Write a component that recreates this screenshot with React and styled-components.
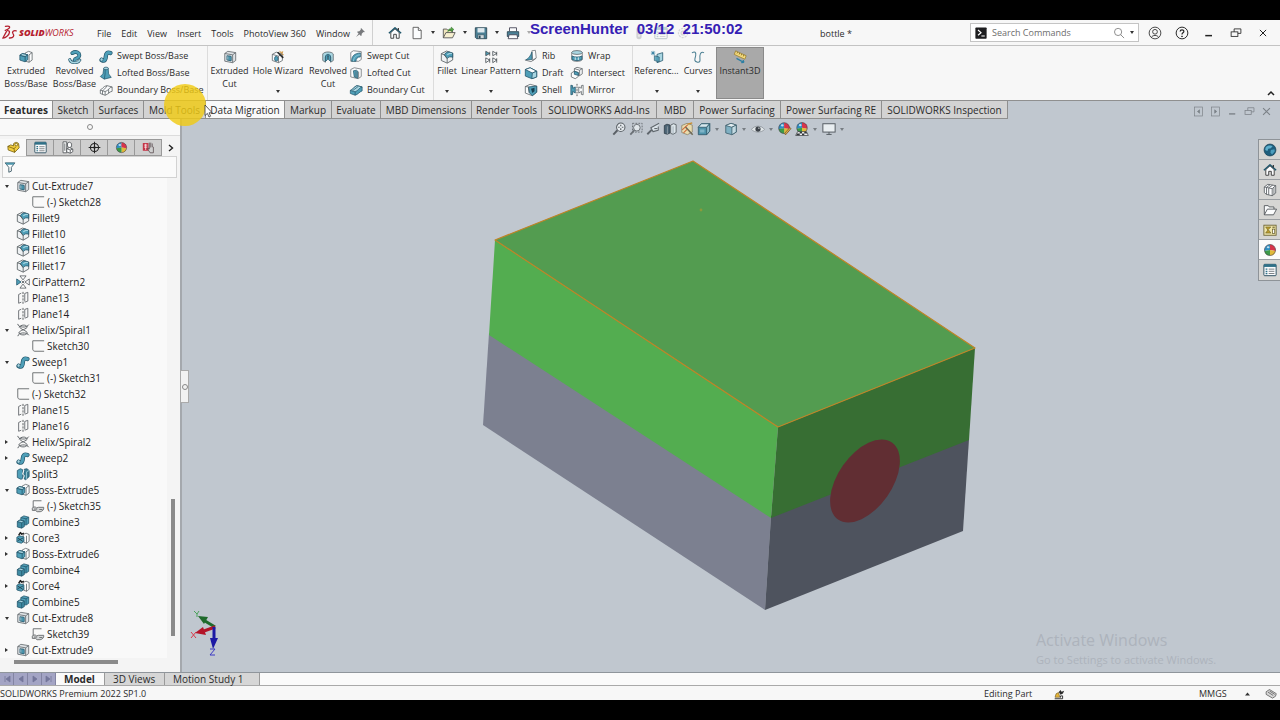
import React from "react";
import styled, { createGlobalStyle, css } from "styled-components";

const T = "#4f9fb8"; // teal face
const L = "#a9d6e2"; // light teal face
const D = "#23566b"; // dark teal outline
const G = "#5d6367"; // grey outline
const W = "#fbfcfd";

const GlobalStyle = createGlobalStyle`
  * { box-sizing: border-box; }
  html, body { margin: 0; background: #000; }
  body { font-family: "Open Sans", "Noto Sans", sans-serif; font-size: 9px; color: #2b2b2b; }
  button, input { font: inherit; color: inherit; }
  ul { list-style: none; margin: 0; padding: 0; }
`;

/* ---------- icons ---------- */

const sphere = (cx, cy, r) => (
  <g>
    <path d={`M${cx} ${cy}L${cx - r} ${cy + 1}A${r} ${r} 0 0 1 ${cx} ${cy - r}Z`} fill="#2e8fc4" />
    <path d={`M${cx} ${cy}V${cy - r}A${r} ${r} 0 0 1 ${cx + r} ${cy + 1}Z`} fill="#d8344a" />
    <path d={`M${cx} ${cy}L${cx + r} ${cy + 1}A${r} ${r} 0 0 1 ${cx} ${cy + r}Z`} fill="#e0b93a" />
    <path d={`M${cx} ${cy}V${cy + r}A${r} ${r} 0 0 1 ${cx - r} ${cy + 1}Z`} fill="#3c9a48" />
    <circle cx={cx} cy={cy} r={r} fill="none" stroke="#4a4048" strokeWidth="0.7" />
    <ellipse cx={cx - r / 3} cy={cy - r / 2} rx={r / 4} ry={r / 5} fill="#fff" opacity="0.7" />
  </g>
);

const sweepShape = (
  <g>
    <path d="M3 12.6C6.8 14.6 7.6 11.4 7.8 8.4C8 5 9.6 3.2 13 4.6" fill="none" stroke={D} strokeWidth="5" strokeLinecap="round" />
    <path d="M3 12.6C6.8 14.6 7.6 11.4 7.8 8.4C8 5 9.6 3.2 13 4.6" fill="none" stroke={T} strokeWidth="3.4" strokeLinecap="round" />
    <ellipse cx="3" cy="12" rx="1.7" ry="2" fill={L} stroke={D} strokeWidth="0.7" />
  </g>
);

const ICONS = {
  extrude: (
    <g strokeWidth="0.9" strokeLinejoin="round">
      <path d="M7 3.5L11 1.5L15 3V11.5L11.5 14L8 13Z" fill={W} stroke={G} />
      <path d="M11.5 5.5V14M11.5 5.5L15 3" stroke={G} fill="none" />
      <path d="M1 6L4 4L10 5.5V11L7 13.5L1 11.5Z" fill={T} stroke={D} />
      <path d="M1 6L7 7.5L10 5.5M7 7.5V13.5" stroke={D} fill="none" />
      <path d="M1 6L4 4L10 5.5L7 7.5Z" fill={L} stroke={D} />
    </g>
  ),
  revolve: (
    <g fill="none" strokeLinecap="round">
      <path d="M5 3.5C9 0.8 14 3 12.6 7.4C11.8 10 8 9 7.6 11.4" stroke={D} strokeWidth="4.4" />
      <path d="M5 3.5C9 0.8 14 3 12.6 7.4C11.8 10 8 9 7.6 11.4" stroke={T} strokeWidth="2.8" />
      <path d="M2 11C3 15.5 12 15.5 13.5 11.5" stroke={D} strokeWidth="3.4" />
      <path d="M2 11C3 15.5 12 15.5 13.5 11.5" stroke={L} strokeWidth="1.9" />
    </g>
  ),
  sweep: sweepShape,
  loft: (
    <g stroke={D} strokeWidth="0.8" strokeLinejoin="round">
      <path d="M5.5 2.5L4.5 9L1.5 12L6 15L14 13L11 9L10.5 2.5Z" fill={T} />
      <ellipse cx="8" cy="2.8" rx="2.6" ry="1.5" fill={L} />
      <path d="M6 15L7 9L7 4" fill="none" />
    </g>
  ),
  boundary: (
    <g stroke={G} strokeWidth="0.9" fill={W} strokeLinejoin="round">
      <path d="M1.5 8C4 7 5 3.5 9 3L15 4.5V9.5C11.5 10 10.5 13 7 14L1.5 12Z" />
      <path d="M1.5 8L7 9.8C10.5 9 11.5 5 15 4.5M7 9.8V14M4 9V13M9 3.2C7 7 6 7 4 9M11 7V12" fill="none" />
    </g>
  ),
  cut: (
    <g strokeWidth="0.9" strokeLinejoin="round">
      <path d="M2 4L5.5 1.5L14.5 3V12L11 14.5L2 12.8Z" fill="#dfe3e6" stroke={G} />
      <path d="M2 4L11 5.5L14.5 3M11 5.5V14.5" stroke={G} fill="none" />
      <path d="M4.5 6.5L9.2 7.3V12.3L4.5 11.4Z" fill={L} stroke={D} />
      <path d="M6.6 6.9V11.8L9.2 12.3V7.3Z" fill={T} stroke={D} strokeWidth="0.6" />
    </g>
  ),
  hole: (
    <g strokeLinejoin="round">
      <path d="M1.5 5L6 2.5L13 4.5V12L8.5 14.5L1.5 12Z" fill={W} stroke={G} strokeWidth="0.9" />
      <path d="M1.5 5L8.5 7L13 4.5M8.5 7V14.5" fill="none" stroke={G} strokeWidth="0.9" />
      <ellipse cx="6" cy="10" rx="2" ry="2.8" fill={T} stroke={D} strokeWidth="0.8" />
      <path d="M14 9L7.5 2.5" stroke="#2c2c2c" strokeWidth="1.8" />
      <path d="M10 1L11 3L13.5 2L12 4.3L14.5 5.5" stroke="#c98a2e" strokeWidth="1" fill="none" />
    </g>
  ),
  revcut: (
    <g strokeWidth="0.9" strokeLinejoin="round">
      <path d="M2 4.5C4 1.5 12 1.5 14 4.5V12L11 14V8L8 6.5L5 8V14L2 12Z" fill={L} stroke={G} />
      <path d="M5 8C5 4 11 4 11 8V13L8.6 11V6.5H7.4V11L5 13Z" fill={T} stroke={D} />
    </g>
  ),
  sweptcut: (
    <g strokeWidth="0.8" strokeLinejoin="round">
      <path d="M2 4L5 2L14 3V12L11 14H2Z" fill={W} stroke={G} />
      <path d="M3 14C3 8 6 5 13 4.5V9C9.5 9 8 11 8 14Z" fill={T} stroke={D} />
      <path d="M5 14C5.5 9.5 8 7 13 6.6" fill="none" stroke={L} />
    </g>
  ),
  loftcut: (
    <g strokeWidth="0.8" strokeLinejoin="round">
      <path d="M2 4L6 2L14 3.5V12L10.5 14.5L2 12.5Z" fill={W} stroke={G} />
      <path d="M5 5.5L8.5 4.8L10 6V14L6 12.5Z" fill={T} stroke={D} />
      <path d="M8 6V13M11 6.5V13.5" stroke={G} />
    </g>
  ),
  boundcut: (
    <g strokeWidth="0.8" strokeLinejoin="round">
      <path d="M1.5 8.5C4 8 6 4 9 3L15 4.5V9C12 10 10.5 13 7 14L1.5 12Z" fill={T} stroke={D} />
      <path d="M1.5 8.5L7 10C10.5 9 12 5 15 4.5L9 3C6 4 4 8 1.5 8.5Z" fill={L} stroke={D} />
      <path d="M4 8.8L10.5 4M7 10V14" stroke={D} fill="none" />
    </g>
  ),
  fillet: (
    <g strokeWidth="1" strokeLinejoin="round">
      <path d="M1.5 4.2L7.5 1.2L14.5 3.6V11.4L8.2 15L1.5 12Z" fill="#eef1f3" stroke={G} />
      <path d="M5 5.6C5.6 3.6 8.4 2 10.4 2.3L14.5 3.6V8.4C12.4 7.2 9.4 7.6 8.2 9.8Z" fill={T} stroke={D} />
      <path d="M8.4 5.6C9.6 4.2 11.6 3.6 13.6 4" fill="none" stroke={L} strokeWidth="1.4" />
      <path d="M1.5 4.2L5 5.6L8.2 9.8V15" fill="none" stroke={G} />
    </g>
  ),
  linear: (
    <g stroke="#40474d" strokeWidth="0.9" fill={W} strokeLinejoin="round">
      <path d="M2 1.5L6.5 4L2 6.5Z" fill={T} />
      <path d="M10 1.5L14.5 4L10 6.5ZM2 9L6.5 11.5L2 14.5ZM10 9L14.5 11.5L10 14.5Z" />
      <path d="M6.5 2V6.5M14.5 2V6.5M6.5 9.5V14.5M14.5 9.5V14.5" />
    </g>
  ),
  rib: (
    <g strokeWidth="0.8" strokeLinejoin="round">
      <path d="M9 2L13 1.5L14 10L10 13Z" fill={W} stroke={G} />
      <path d="M9 3.5V12L2 12.5C5 11 7.5 8 9 3.5Z" fill={T} stroke={D} />
      <path d="M1 12.5L8 14.5L14 10.5" stroke={G} fill="none" />
    </g>
  ),
  draft: (
    <g strokeWidth="0.9" strokeLinejoin="round">
      <path d="M1.5 4L7 2L14.5 6V12.5L9 14.5L1.5 11.5Z" fill={T} stroke={D} />
      <path d="M1.5 4L7 2L14.5 6L9.5 8Z" fill={W} stroke={D} />
      <path d="M9.5 8L14.5 6V12.5L9 14.5Z" fill={L} stroke={D} />
    </g>
  ),
  shell: (
    <g strokeWidth="0.9" strokeLinejoin="round">
      <path d="M1.5 4L7 1.5L14.5 3.5V10.5L9.5 14.5L1.5 11.5Z" fill={W} stroke={G} />
      <path d="M5 4.5L14.5 3.5V10.5L9.5 14.5L6 11Z" fill={T} stroke={D} />
      <path d="M8 6.5L12 5.5V9.5L9.5 11.5Z" fill="#173f50" />
      <path d="M1.5 4L5 4.5L6 11" fill="none" stroke={G} />
    </g>
  ),
  wrap: (
    <g strokeWidth="0.9">
      <path d="M2 4V12C3 14.8 13 14.8 14 12V4Z" fill={W} stroke={G} />
      <ellipse cx="8" cy="4" rx="6" ry="2.2" fill={L} stroke={G} />
      <path d="M2.4 8C5 9.6 11 9.6 13.6 8V12C11 13.6 5 13.6 2.4 12Z" fill={T} stroke={D} />
      <path d="M6 9.5V12.5M9.5 9.5V12.5" stroke={W} />
    </g>
  ),
  intersect: (
    <g strokeWidth="0.9" strokeLinejoin="round">
      <path d="M5 3L8 1.5L14 3V9L11 11L5 9.5Z" fill={W} stroke={G} />
      <path d="M1.5 8L5 6L9.5 7.5V12L6 14.5L1.5 12.5Z" fill={W} stroke={G} />
      <path d="M5 6L9.5 7.5V10.7L5 9.5Z" fill={T} stroke={D} />
      <path d="M5 3L11 4.8L14 3M11 4.8V11" stroke={G} fill="none" />
    </g>
  ),
  mirror: (
    <g strokeWidth="0.9" strokeLinejoin="round">
      <path d="M1 2.5L3 3V6L6 4.5V11.5L3 9.5V13L1 13.5Z" fill={T} stroke={D} />
      <path d="M15 2.5L13 3V6L10 4.5V11.5L13 9.5V13L15 13.5Z" fill={W} stroke={G} />
      <path d="M8 1V15" stroke="#333" strokeDasharray="2 1" />
    </g>
  ),
  refgeo: (
    <g strokeWidth="0.9" strokeLinejoin="round">
      <path d="M8 5L14.5 3V12L8 14.5Z" fill={L} stroke={D} />
      <path d="M5 6.5L10.5 8V13.5L5 12Z" fill={T} stroke={D} opacity="0.85" />
      <path d="M3.5 1V6M1 3.5H6M1.7 1.7L5.3 5.3M5.3 1.7L1.7 5.3" stroke="#2f7da0" />
    </g>
  ),
  curves: (
    <g fill="none" stroke="#4b7f92" strokeWidth="1.2" strokeLinecap="round">
      <path d="M1.5 3C4 1.5 6 2.5 5.4 6C4.8 10 2.5 13 7.5 14C12.5 14.5 9 8.5 10.5 5C11.3 3 12.6 2 14.5 3" />
    </g>
  ),
  instant: (
    <g strokeLinejoin="round">
      <path d="M3 1L15 6.5L13.5 10.5L1.5 5Z" fill="#f5dc80" stroke="#94761e" strokeWidth="0.8" />
      <path d="M5.2 2.4L4.6 4M7.6 3.4L7 5.2M10 4.6L9.4 6.2M12.4 5.6L11.8 7.4" stroke="#6b5310" strokeWidth="0.8" />
      <path d="M4 9.5L12 14M12.4 14.2L11.6 11.6M12.4 14.2L9.4 14.4" stroke="#2d7fa3" strokeWidth="1.6" fill="none" />
    </g>
  ),
  home: (
    <g strokeLinejoin="round">
      <path d="M3.2 7.5V14H6.5V9.5H9.5V14H12.8V7.5L8 3.2Z" fill={W} stroke="#333" strokeWidth="1" />
      <path d="M1 8.3L8 2L15 8.3" fill="none" stroke="#20566a" strokeWidth="1.7" />
      <path d="M11.8 2.4V5" stroke="#333" strokeWidth="1.4" />
    </g>
  ),
  doc: (
    <g stroke="#555" strokeWidth="1" fill={W} strokeLinejoin="round">
      <path d="M3.5 1.5H9.5L12.8 5V14.5H3.5Z" />
      <path d="M9.5 1.5V5H12.8" />
    </g>
  ),
  open: (
    <g strokeLinejoin="round">
      <path d="M1.5 13.5V3.5H5.5L7 5H12V8" fill="#f0e6bd" stroke="#555" strokeWidth="1" />
      <path d="M1.5 13.5L4.5 7.5H15L12 13.5Z" fill="#f6efcf" stroke="#555" strokeWidth="1" />
      <path d="M6.5 6.5C7 3.5 8.5 3 10.5 3V1.2L13.6 4L10.5 6.6V4.9C9 4.9 8 5.2 6.5 6.5Z" fill="#53a244" stroke="#2c6d25" strokeWidth="0.5" />
    </g>
  ),
  save: (
    <g strokeLinejoin="round">
      <path d="M1.5 2H14.5V14.5H3L1.5 13Z" fill="#4a7f94" stroke="#2a4654" strokeWidth="1" />
      <rect x="4" y="2.4" width="8" height="5" fill="#dfe9ee" />
      <rect x="4.5" y="10" width="7" height="4.3" fill="#cfd8dc" stroke="#2a4654" strokeWidth="0.6" />
      <rect x="5.5" y="11" width="2" height="3" fill="#2a4654" />
    </g>
  ),
  print: (
    <g strokeLinejoin="round">
      <path d="M4 6V2H12V6" fill={W} stroke="#445" strokeWidth="1" />
      <path d="M1.5 6.5H14.5V12H1.5Z" fill="#4b8197" stroke="#2a4654" strokeWidth="1" />
      <path d="M3.5 10H12.5L13.5 14.5H2.5Z" fill={W} stroke="#445" strokeWidth="1" />
    </g>
  ),
  pin: (
    <g fill="#77797c">
      <path d="M8.8 1.5L14.5 7.2L13 7.8L12.2 7.4L9.8 9.8L9.6 12.4L8.6 13L3 7.4L3.8 6.4L6.3 6.2L8.6 3.8L8.2 2.8Z" />
      <path d="M5.5 9.2L6.8 10.5L1.5 14.5Z" />
    </g>
  ),
  user: (
    <g fill="none" stroke="#333" strokeWidth="1">
      <circle cx="8" cy="8" r="6.7" />
      <circle cx="8" cy="6.6" r="2.7" />
      <path d="M4 13.2C4.5 10 11.5 10 12 13.2" />
    </g>
  ),
  help: (
    <g fill="none" stroke="#222" strokeWidth="1.1">
      <circle cx="8" cy="8" r="6.7" />
      <path d="M5.9 6.3C5.9 3.6 10.2 3.7 10.1 6.2C10 7.8 8 7.8 8 9.6" strokeWidth="1.4" />
      <circle cx="8" cy="11.8" r="0.5" fill="#222" />
    </g>
  ),
  min: <path d="M3 11.5H12" stroke="currentColor" strokeWidth="2" />,
  restore: (
    <g fill="none" stroke="currentColor" strokeWidth="1.1">
      <path d="M5.5 6.5V2.5H14.5V8.5H10.5" />
      <rect x="1.5" y="6.5" width="9" height="6" />
    </g>
  ),
  close: <path d="M3 3L13 13M13 3L3 13" stroke="currentColor" strokeWidth="1.6" />,
  paneL: (
    <g fill="none" stroke="currentColor" strokeWidth="1">
      <rect x="2" y="1.5" width="12" height="13" />
      <path d="M9.5 5.5L6.5 8L9.5 10.5Z" fill="currentColor" />
    </g>
  ),
  paneR: (
    <g fill="none" stroke="currentColor" strokeWidth="1">
      <rect x="2" y="1.5" width="12" height="13" />
      <path d="M6.8 5.5L9.8 8L6.8 10.5Z" fill="currentColor" />
    </g>
  ),
  terminal: (
    <g>
      <rect x="0.5" y="0.5" width="15" height="15" rx="1" fill="#1d1d1f" />
      <path d="M4 4L8 7.5L4 11" fill="none" stroke="#fff" strokeWidth="1.6" />
      <path d="M8.5 12H13" stroke="#fff" strokeWidth="1.4" />
    </g>
  ),
  search: (
    <g fill="none" stroke="#777" strokeWidth="1.1">
      <circle cx="6.8" cy="6.6" r="4.8" />
      <path d="M10.2 10.2L14.8 14.8" />
    </g>
  ),
  part: (
    <g stroke="#6b560a" strokeWidth="0.9" strokeLinejoin="round">
      <path d="M1 6.6L4.6 4.8L8 6V3.8C8.6 1.6 12 0.8 14.2 3L15 8.4L9.4 14L1.4 11Z" fill="#f2cd3f" />
      <path d="M1 6.6L8.6 9.4L11 7.2M8.6 9.4L9.4 14" fill="none" />
      <circle cx="11.4" cy="4.4" r="1.6" fill="#fff4c0" />
    </g>
  ),
  props: (
    <g>
      <rect x="1" y="1.5" width="14" height="13" rx="1" fill={W} stroke="#2c4f60" strokeWidth="1.1" />
      <rect x="1" y="1.5" width="14" height="3" fill="#2f7188" />
      <path d="M3 7H5M3 9.5H5M3 12H5" stroke="#2f7188" strokeWidth="1.5" />
      <path d="M6.5 7H13M6.5 9.5H13M6.5 12H13" stroke="#6c7478" strokeWidth="1" />
    </g>
  ),
  config: (
    <g fill={W} stroke="#505458" strokeWidth="1" strokeLinejoin="round">
      <path d="M2.5 1H7V14.5H2.5Z" />
      <path d="M8 2.5L10.5 1.5L13 3V7L10.5 8L8 7Z" />
      <path d="M7 9.5L10.5 8L14.5 10V13.2L11.4 15L7 13.5Z" />
      <path d="M4.7 3V12M7 9.5L11.4 11L14.5 10M11.4 11V15" fill="none" />
    </g>
  ),
  dimx: (
    <g fill="none" stroke="#222" strokeWidth="1.3">
      <circle cx="8" cy="8" r="5" />
      <path d="M8 0.8V15.2M0.8 8H15.2" />
      <circle cx="8" cy="8" r="0.8" fill="#222" />
    </g>
  ),
  appear: sphere(8, 8, 6.3),
  cam: (
    <g strokeLinejoin="round">
      <path d="M1 2.5H8V12H1Z" fill="#c53346" />
      <path d="M2.5 5H6.5M2.5 7.5H6.5M4.5 3.5V11" stroke="#fff" strokeWidth="0.9" />
      <path d="M9 2V10L7.5 8.5L7 10L10 14.5H14V7.5L12.6 7V3M10.8 2V8" fill="none" stroke="#5e5054" strokeWidth="1" />
    </g>
  ),
  funnel: (
    <g strokeLinejoin="round">
      <path d="M1.5 2.5H14.5L9.8 8.5V13.5L6.4 15V8.5Z" fill={W} stroke="#2f4e5b" strokeWidth="1.1" />
      <path d="M2 2.2H14L12.6 5H3.6Z" fill="#4a94aa" />
    </g>
  ),
  sketch: <path d="M15 2H2V11.5C2 13 3 14 4.5 14H15" fill="none" stroke="#6d7073" strokeWidth="1.1" />,
  sketchShared: (
    <g fill="none" stroke="#6d7073" strokeWidth="1.1">
      <path d="M12 2H2.5V10" />
      <path d="M1.5 10.5C2 8.8 5 8.6 6.5 10.2L8.5 9.5H14.5C15 12 13 14.2 10.5 14.5H7L5 13H1.5Z" fill="#d4d6d7" />
      <path d="M3.5 11.5H7M9.5 12H13" />
    </g>
  ),
  pattern: (
    <g stroke="#50565a" strokeWidth="0.9" fill={W} strokeLinejoin="round">
      <path d="M0.8 4.5L5.8 8L0.8 11.5Z" fill={T} stroke={D} />
      <path d="M15.2 4.5L10.2 8L15.2 11.5ZM4.5 1L8 5.6L11.5 1ZM4.5 15L8 10.4L11.5 15Z" />
      <path d="M6.4 6.4L9.6 9.6M9.6 6.4L6.4 9.6" />
    </g>
  ),
  plane: (
    <g fill="none" stroke="#62676b" strokeWidth="1">
      <path d="M6 2.5L3 4V14L6 12.8M10 12V2.8L13.5 1.5V11.5L10 12.8" />
      <path d="M8 1V15" stroke="#45494c" strokeDasharray="2.5 1.2" />
    </g>
  ),
  helix: (
    <g fill="none" stroke="#5f6468" strokeWidth="1.1" strokeLinecap="round">
      <path d="M2 1.5C2.4 5.4 12.4 6 14.4 2.2" />
      <path d="M2.2 14.6C2.4 10.6 12.4 10 14.4 13.6" />
      <path d="M4 4.4C5.6 1.8 11 1.6 12.8 4.2C13.4 6.8 3.4 8.4 3.2 11.4C4.4 14.2 11.4 14.4 13 11.6C12.6 8.6 4.4 7.4 4 4.4Z" />
    </g>
  ),
  split: (
    <g strokeWidth="0.9" strokeLinejoin="round">
      <path d="M1.5 4L5 2L7.5 3V13.5L5.5 14L1.5 12Z" fill={T} stroke={D} />
      <path d="M9.5 2.5L12.5 2L15 4V11L11 14.5L8.5 13Z" fill="#3b7f95" stroke={D} />
      <path d="M9 3.5L7.5 8L9.5 10L8 14" fill="none" stroke="#fff" strokeWidth="1.1" />
      <path d="M12 5.5L15 4M12 5.5V13.5" stroke={L} fill="none" />
    </g>
  ),
  combine: (
    <g stroke={D} strokeWidth="0.9" strokeLinejoin="round">
      <path d="M5.5 3L9 1L14.5 2.5V9.5L11.5 11.5L5.5 10Z" fill={T} />
      <path d="M5.5 3L11.5 4.4L14.5 2.5M11.5 4.4V11" fill="none" />
      <path d="M1.5 7.5L4.5 5.8L9.5 7V13.2L6.5 15L1.5 13.7Z" fill="#3f8ba3" />
      <path d="M1.5 7.5L4.5 5.8L9.5 7L6.5 8.8Z" fill={L} />
      <path d="M6.5 8.8V15" />
    </g>
  ),
  core: (
    <g strokeWidth="0.9" strokeLinejoin="round">
      <path d="M8 4L11.5 2.5L15 4V11.5L12.5 14L9 13Z" fill={W} stroke={G} />
      <path d="M12 5.5V14" stroke={G} />
      <path d="M1 7L4 5.5L9 6.8V12L6 14L1 12.5Z" fill={T} stroke={D} />
      <path d="M3 5L5 1.8L6.5 3.6L9 2.6" stroke="#222" strokeWidth="1.7" fill="none" />
      <path d="M2 8L8 12M2 11L8 8" stroke="#1f3b47" />
    </g>
  ),
  zoomfit: (
    <g fill="none" stroke="#5a6066" strokeWidth="1.2">
      <circle cx="10" cy="6" r="4.8" fill="#e8edf1" />
      <path d="M6.2 9.4L1.5 14.5" strokeWidth="2.2" />
      <path d="M10 3V4.8M10 7.2V9M7 6H8.8M11.2 6H13" strokeWidth="1.4" />
    </g>
  ),
  zoomarea: (
    <g fill="none" stroke="#6a7076" strokeWidth="1.1">
      <rect x="4" y="1.5" width="11" height="10" strokeDasharray="2 1.4" />
      <circle cx="9" cy="6.5" r="3.8" fill="#e0e6ea" />
      <path d="M6.2 9.3L1.5 14.5" strokeWidth="2" />
    </g>
  ),
  prevview: (
    <g fill="none" stroke="#5f666c" strokeWidth="1.2" strokeLinejoin="round">
      <path d="M15 1.5L5.5 6.5L8 11L14 9.5V5" fill="#d9e2e8" />
      <path d="M6.5 9L1.5 14" strokeWidth="2.2" />
      <path d="M9.5 7.5H13" />
    </g>
  ),
  section: (
    <g strokeWidth="0.9" strokeLinejoin="round">
      <path d="M1.5 4L4.5 2.5L8 3.5V12.5L5 14L1.5 13Z" fill="#4b6475" stroke="#2d3b45" />
      <path d="M8.8 3.5L12 2L15 3V12L11.5 14L8.8 13Z" fill="#dde6eb" stroke="#4a5257" />
      <path d="M5 5V14M11.5 5V14" stroke="#99a5ad" />
    </g>
  ),
  dynview: (
    <g strokeLinejoin="round">
      <path d="M2 4L8 1.5L14 3.5V11.5L8.5 14.5L2 12Z" fill="#e9dcae" stroke="#8a8267" strokeWidth="0.9" />
      <path d="M14.5 14.5L6 5.5" stroke="#6f6a58" strokeWidth="1.8" />
      <path d="M2.5 9L9 3M4 12.5L8 8.5" stroke="#cf6a3a" strokeWidth="1.2" />
      <path d="M9 2.5L14 1" stroke="#c98b2a" strokeWidth="1.6" />
    </g>
  ),
  orient: (
    <g strokeWidth="0.9" strokeLinejoin="round">
      <path d="M1.5 6L5 2H14.5V10.5L11 14.5H1.5Z" fill="#4f93ab" stroke="#2c5567" />
      <path d="M1.5 6L5 2H14.5L11 6Z" fill="#d7e8ee" stroke="#2c5567" />
      <path d="M11 6V14.5L14.5 10.5V2Z" fill="#8fbccb" stroke="#2c5567" />
      <path d="M3.5 8.5H8.5V12H3.5Z" fill="#7fb4c7" stroke="none" />
    </g>
  ),
  display: (
    <g strokeWidth="0.9" strokeLinejoin="round">
      <path d="M2 4L8 1.5L14 3.5V11.5L9 14.5L2 12.5Z" fill="#7fb0c3" stroke="#3a5b69" />
      <path d="M2 4L8 1.5L14 3.5L9 6Z" fill="#e3eef2" stroke="#3a5b69" />
      <path d="M9 6V14.5L14 11.5V3.5Z" fill="#c3dae2" stroke="#3a5b69" />
    </g>
  ),
  eye: (
    <g>
      <path d="M0.5 8.5C4 3.5 12 3.5 15.5 8.5C12 12.5 4 12.5 0.5 8.5Z" fill="#e0e5e8" stroke="#848b91" strokeWidth="0.8" />
      <circle cx="8" cy="8" r="3" fill="#3d434a" />
      <circle cx="9" cy="7" r="0.8" fill="#e0e5e8" />
    </g>
  ),
  editAppear: (
    <g>
      {sphere(7, 7, 6.2)}
      <path d="M15 7.5L8.5 14.8L7.8 12.8L13.4 6.5Z" fill="#d8a84e" stroke="#6c4c1a" strokeWidth="0.7" />
    </g>
  ),
  scene: (
    <g>
      {sphere(8, 6.6, 6)}
      <path d="M0.8 15.4L3 11H13L15.2 15.4Z" fill="#f2f2f2" stroke="#33383c" strokeWidth="0.8" />
      <path d="M2.4 13.2H5.4V11.2H8V13.2H10.6V11.2H13L14 13.2H10.6V15.2H8V13.2H5.4V15.2H1.6Z" fill="#33383c" />
    </g>
  ),
  monitor: (
    <g fill="#e9eef1" stroke="#52595f" strokeWidth="1.1">
      <rect x="1" y="2" width="14" height="9.5" />
      <path d="M8 11.5V14M5 14.2H11" />
    </g>
  ),
  globe: (
    <g>
      <circle cx="8" cy="8" r="6.8" fill="#1f5f7d" stroke="#153f54" strokeWidth="0.8" />
      <path d="M3 5C5 2.5 9 2.5 11 3.5L9 6L6 6.5L5 9L2.5 8Z" fill="#5fb0cd" />
      <path d="M9 8L13 7L13.5 9.5L10.5 13L8.5 11Z" fill="#4b9dbd" />
    </g>
  ),
  library: (
    <g fill={W} stroke="#4f5458" strokeWidth="0.9" strokeLinejoin="round">
      <path d="M1.5 4.5L5.5 1.5L14.5 3V11.5L10.5 14.5L4 13L1.5 11Z" />
      <path d="M4 5.5V13M6.5 6V13.5M10.5 6.5V14.5M1.5 4.5L10.5 6.5L14.5 3M4 5L8 2M6.5 5.5L11 2.5M12.5 5V13" fill="none" />
    </g>
  ),
  folder: (
    <g fill={W} stroke="#4f5458" strokeWidth="1" strokeLinejoin="round">
      <path d="M1.5 13.5V3H6L7 4.5H12.5V7" />
      <path d="M1.5 13.5L5 7H15.5L12 13.5Z" />
    </g>
  ),
  palette: (
    <g>
      <rect x="1" y="2.5" width="14" height="11.5" fill="#efe5a8" stroke="#6a6233" strokeWidth="1" />
      <path d="M3 4.5H9L6 7.5L9 11.5H3L5.5 8Z" fill="#bd9e2c" stroke="#5e5423" strokeWidth="0.6" />
      <rect x="10.8" y="7" width="2.6" height="5" fill={W} stroke="#5e5423" strokeWidth="0.8" />
      <path d="M10.8 4.8H13.4" stroke="#5e5423" strokeWidth="1.2" />
    </g>
  ),
  statusEdit: (
    <g>
      <path d="M1.5 12L3 7L6.5 5L8.5 12Z" fill="#e7b63a" stroke="#5b4715" strokeWidth="0.8" />
      <path d="M7 4.5L9.5 1.5L11 4L14.8 2.5L13 6.5L9.5 8.5Z" fill="#2b2b2b" />
      <path d="M1 14.2H12.5V10H9.5V12.5" fill="none" stroke="#333" strokeWidth="1.4" />
    </g>
  ),
  tag: (
    <g fill="#d7d7d7" stroke="#555" strokeWidth="1" strokeLinejoin="round">
      <path d="M1.5 5L6 2L15 7.5L14 11L10 13.5L1.5 8.5Z" />
      <path d="M4 5.5L11 10M6 4L13 8.5" />
    </g>
  ),
  traffic: (
    <g>
      <rect x="5" y="1" width="6" height="14" rx="3" fill="#777b7f" />
      <circle cx="8" cy="4.5" r="1.4" fill="#c9c9c9" />
      <circle cx="8" cy="11" r="1.4" fill="#c9c9c9" />
    </g>
  ),
  gear: (
    <g fill="none" stroke="#8b8f93" strokeWidth="1.4">
      <circle cx="8" cy="8" r="5.2" strokeDasharray="2.4 1.2" />
      <circle cx="8" cy="8" r="2.2" />
    </g>
  ),
};

const Svg = styled.svg`
  width: ${(p) => p.$s}px;
  height: ${(p) => p.$s}px;
  display: block;
  flex: none;
`;
const Icon = ({ name, size = 14 }) => (
  <Svg viewBox="0 0 16 16" $s={size} aria-hidden="true">{ICONS[name]}</Svg>
);

/* ---------- shared parts ---------- */

const plainButton = css`
  border: 0;
  background: none;
  padding: 0;
  margin: 0;
  cursor: default;
`;

const Caret = styled.span`
  width: 0;
  height: 0;
  flex: none;
  border: 2px solid transparent;
  border-top: 3px solid ${(p) => p.$c || "#333"};
  border-bottom: 0;
`;

const IconButton = styled.button`
  ${plainButton}
  width: ${(p) => p.$w || 16}px;
  height: 16px;
  flex: none;
  display: flex;
  align-items: center;
  justify-content: center;
  color: ${(p) => p.$c || "#222"};
  opacity: ${(p) => (p.$faint ? 0.3 : 1)};
`;

/* ---------- frame ---------- */

const Page = styled.div`
  position: relative;
  min-height: 100vh;
  padding: 20px 0;
  background: #000;
  display: flex;
  flex-direction: column;
  overflow: hidden;
`;
const AppWindow = styled.div`
  flex: 1;
  display: flex;
  flex-direction: column;
  background: #f7f7f7;
`;

/* ---------- title bar ---------- */

const TitleBar = styled.header`
  height: 26px;
  flex: none;
  display: flex;
  align-items: center;
  border-bottom: 1px solid #c3c3c3;
`;
const Brand = styled.div`
  width: 97px;
  padding-left: 2px;
  display: flex;
  align-items: center;
  gap: 2px;
  color: #b5202e;
  font: italic 9px/12px "Open Sans", sans-serif;
  b { font-weight: 800; }
`;
const BrandMark = styled.svg`
  width: 15px;
  height: 15px;
`;
const Menu = styled.nav`
  display: flex;
  gap: 10px;
  padding-top: 2px;
`;
const MenuItem = styled.button`
  ${plainButton}
  line-height: 14px;
`;
const PinBox = styled.div`
  width: 23px;
  height: 25px;
  display: flex;
  align-items: center;
  justify-content: center;
  border-right: 1px solid #d0d0d0;
  margin-right: 14px;
`;
const QuickBar = styled.div`
  flex: 1;
  display: flex;
  align-items: center;
  gap: 6px;
`;
const DocName = styled.div`
  width: 150px;
  padding-top: 1px;
`;
const SearchBox = styled.label`
  width: 169px;
  height: 19px;
  display: flex;
  align-items: center;
  gap: 5px;
  padding: 0 4px;
  background: #fff;
  border: 1px solid #c4c4c4;
`;
const SearchInput = styled.input`
  flex: 1;
  min-width: 0;
  border: 0;
  padding: 0;
  outline: 0;
  background: none;
  &::placeholder { color: #6d6d6d; opacity: 1; }
`;
const WindowButtons = styled.div`
  display: flex;
  gap: 11px;
  padding: 0 9px 0 8px;
`;

/* ---------- ribbon ---------- */

const Ribbon = styled.section`
  height: 55px;
  flex: none;
  display: flex;
  border-bottom: 1px solid #8f8f8f;
`;
const Group = styled.div`
  display: flex;
  padding: 0 6px 0 2px;
  border-right: 1px solid #dcdcdc;
`;
const BigButton = styled.button`
  ${plainButton}
  width: ${(p) => p.$w}px;
  height: 52px;
  margin-top: ${(p) => (p.$on ? 1 : 0)}px;
  display: flex;
  flex-direction: column;
  align-items: center;
  padding-top: 4px;
  line-height: 13px;
  white-space: nowrap;
  ${(p) => p.$on && css`background: #a9a9a9; border: 1px solid #8a8a8a; padding-top: 2px;`}
`;
const BigLabel = styled.span`
  height: 26px;
`;
const Stack = styled.div`
  width: ${(p) => p.$w}px;
  display: flex;
  flex-direction: column;
  padding-top: 1px;
`;
const SmallButton = styled.button`
  ${plainButton}
  height: 17px;
  display: flex;
  align-items: center;
  gap: 4px;
  white-space: nowrap;
`;
const Collapse = styled.button`
  ${plainButton}
  margin-left: auto;
  align-self: flex-end;
  padding: 0 5px 4px 0;
  display: flex;
`;

/* ---------- command tabs ---------- */

const Workspace = styled.main`
  flex: 1;
  display: flex;
  flex-direction: column;
  background: #c0c7cf;
`;
const TabRow = styled.div`
  height: 18px;
  flex: none;
  display: flex;
  justify-content: space-between;
`;
const Tabs = styled.div`
  display: flex;
`;
const Tab = styled.button`
  ${plainButton}
  width: ${(p) => p.$w}px;
  flex: none;
  white-space: nowrap;
  border-right: 1px solid #8f8f8f;
  border-bottom: 1px solid #8f8f8f;
  background: ${(p) => (p.$on ? "#f9f9f9" : "#d3d3d3")};
  font-weight: ${(p) => (p.$bold ? 700 : 400)};
  font-size: 10px;
  line-height: 16px;
`;
const DocButtons = styled.div`
  display: flex;
  gap: 1px;
  padding: 2px 6px 0 0;
`;

/* ---------- side panel ---------- */

const Body = styled.div`
  flex: 1;
  display: flex;
`;
const SidePanel = styled.aside`
  position: relative;
  width: 182px;
  flex: none;
  display: flex;
  flex-direction: column;
  background: #f4f4f4;
  border-right: 2px solid #a4a8ad;
`;
const PanelGrip = styled.div`
  height: 17px;
  display: flex;
  align-items: center;
  justify-content: center;
  border-bottom: 1px solid #dcdcdc;
  background: #f9f9f9;
  &::after {
    content: "";
    width: 4px;
    height: 4px;
    border: 1px solid #888;
    border-radius: 50%;
  }
`;
const PanelTabs = styled.div`
  display: flex;
  height: 20px;
  padding-top: 3px;
`;
const PanelTab = styled.button`
  ${plainButton}
  width: 27px;
  display: flex;
  align-items: center;
  justify-content: center;
  background: ${(p) => (p.$on ? "#f9f9f9" : "#cfcfcf")};
  border: solid #999;
  border-width: ${(p) => (p.$on ? "0 1px 0 0" : "1px 1px 1px 0")};
`;
const MoreTabs = styled(PanelTab)`
  width: 18px;
  background: none;
  border: 0;
`;
const FilterBox = styled.label`
  height: 22px;
  margin: 0 3px 0 2px;
  display: flex;
  align-items: center;
  padding-left: 1px;
  background: #fafafa;
  border: 1px solid #d2d2d2;
`;
const TreeArea = styled.div`
  display: flex;
`;
const Tree = styled.ul`
  flex: 1;
  background: #f9f9f9;
`;
const TreeRow = styled.li`
  height: 16px;
  display: flex;
  align-items: center;
  padding-left: ${(p) => (p.$child ? 20 : 5)}px;
  font-size: 10px;
  white-space: nowrap;
  color: #222;
`;
const Twist = styled.span`
  width: 11px;
  flex: none;
  display: flex;
`;
const RightCaret = styled.span`
  border: 2px solid transparent;
  border-left: 3px solid #333;
  border-right: 0;
`;
const RowLabel = styled.span`
  padding-left: 2px;
`;
const VScroll = styled.div`
  width: 13px;
  display: flex;
  justify-content: center;
  align-items: flex-end;
  padding: 0 2px 22px 0;
`;
const HScroll = styled.div`
  flex: 1;
  padding: 2px 0 0 14px;
`;
const Thumb = styled.div`
  width: ${(p) => p.$w}px;
  height: ${(p) => p.$h}px;
  background: #8a8a8a;
`;
const PanelHandle = styled.button`
  ${plainButton}
  position: absolute;
  left: 180px;
  top: 251px;
  width: 9px;
  height: 33px;
  background: #f2f2f2;
  border: 1px solid #aaa;
  display: flex;
  align-items: center;
  justify-content: center;
  z-index: 2;
  &::after {
    content: "";
    width: 4px;
    height: 4px;
    border: 1px solid #888;
    border-radius: 50%;
  }
`;

/* ---------- viewport ---------- */

const Viewport = styled.section`
  position: relative;
  flex: 1;
  overflow: hidden;
`;
const Scene = styled.svg`
  position: absolute;
  inset: 0;
  width: 100%;
  height: 100%;
`;
const ViewTools = styled.div`
  position: absolute;
  top: 2px;
  left: 0;
  right: 4px;
  display: flex;
  justify-content: center;
  align-items: center;
  gap: 1px;
`;
const ViewCaret = styled(Caret)`
  margin: 0 3px 0 2px;
`;
const TaskPane = styled.div`
  position: absolute;
  top: 20px;
  right: 0;
  width: 22px;
  display: flex;
  flex-direction: column;
  border: 1px solid #8e9398;
  border-right: 0;
`;
const TaskTab = styled.button`
  ${plainButton}
  height: 20px;
  display: flex;
  align-items: center;
  justify-content: center;
  background: ${(p) => (p.$on ? "#fbfbfb" : "#d6d6d4")};
  border-bottom: 1px solid #9a9ea2;
  &:last-child { border-bottom: 0; }
`;
const Watermark = styled.div`
  position: absolute;
  right: 57px;
  bottom: 3px;
  color: #adb3bc;
  font-size: 11px;
  line-height: 18px;
  width: 187px;
  white-space: nowrap;
`;
const WatermarkTitle = styled.div`
  font-size: 16px;
  line-height: 22px;
`;

/* ---------- bottom ---------- */

const BottomTabs = styled.nav`
  height: 14px;
  flex: none;
  display: flex;
  background: #fafafa;
  border-top: 1px solid #8f959b;
  border-bottom: 1px solid #a9a9a9;
`;
const NavCell = styled.button`
  ${plainButton}
  width: 14px;
  display: flex;
  align-items: center;
  justify-content: center;
  background: #a3a4c4;
  border-right: 1px solid #8384a3;
  color: #74769a;
`;
const BottomTab = styled.button`
  ${plainButton}
  width: ${(p) => p.$w}px;
  flex: none;
  padding-left: 8px;
  text-align: left;
  white-space: nowrap;
  font-size: 10px;
  line-height: 12px;
  font-weight: ${(p) => (p.$on ? 700 : 400)};
  background: ${(p) => (p.$on ? "#fafafa" : "#d6d6d6")};
  border-right: 1px solid #9a9a9a;
`;
const StatusBar = styled.footer`
  height: 14px;
  flex: none;
  display: flex;
  align-items: center;
  padding-top: 2px;
  line-height: 12px;
  white-space: nowrap;
`;
const StatusText = styled.span`
  flex: 1;
`;
const StatusCell = styled.span`
  width: ${(p) => p.$w}px;
  display: flex;
  align-items: center;
`;

/* ---------- screen overlays ---------- */

const Stamp = styled.div`
  position: absolute;
  left: 530px;
  top: 20px;
  font: bold 15px/18px "Liberation Sans", Arial, sans-serif;
  color: #3520b4;
  white-space: pre;
`;
const ClickHalo = styled.div`
  position: absolute;
  left: 164px;
  top: 84px;
  width: 42px;
  height: 42px;
  border-radius: 50%;
  background: rgba(240, 203, 20, 0.82);
`;
const Pointer = styled.svg`
  position: absolute;
  left: 204px;
  top: 104px;
  width: 9px;
  height: 14px;
`;

/* ---------- data ---------- */

const MENU = ["File", "Edit", "View", "Insert", "Tools", "PhotoView 360", "Window"];

const TABS = [
  ["Features", 53, true, true], ["Sketch", 41], ["Surfaces", 50], ["Mold Tools", 62],
  ["Data Migration", 79, true], ["Markup", 47], ["Evaluate", 49], ["MBD Dimensions", 91],
  ["Render Tools", 70], ["SOLIDWORKS Add-Ins", 115], ["MBD", 37], ["Power Surfacing", 87],
  ["Power Surfacing RE", 101], ["SOLIDWORKS Inspection", 126],
];

// [label, icon, twist, child]
const TREE = [
  ["Cut-Extrude7", "cut", "open"], ["(-) Sketch28", "sketch", "", 1],
  ["Fillet9", "fillet"], ["Fillet10", "fillet"], ["Fillet16", "fillet"], ["Fillet17", "fillet"],
  ["CirPattern2", "pattern"], ["Plane13", "plane"], ["Plane14", "plane"],
  ["Helix/Spiral1", "helix", "open"], ["Sketch30", "sketch", "", 1],
  ["Sweep1", "sweep", "open"], ["(-) Sketch31", "sketch", "", 1],
  ["(-) Sketch32", "sketch"], ["Plane15", "plane"], ["Plane16", "plane"],
  ["Helix/Spiral2", "helix", "closed"], ["Sweep2", "sweep", "closed"], ["Split3", "split"],
  ["Boss-Extrude5", "extrude", "open"], ["(-) Sketch35", "sketchShared", "", 1],
  ["Combine3", "combine"], ["Core3", "core", "closed"], ["Boss-Extrude6", "extrude", "closed"],
  ["Combine4", "combine"], ["Core4", "core", "closed"], ["Combine5", "combine"],
  ["Cut-Extrude8", "cut", "open"], ["Sketch39", "sketchShared", "", 1], ["Cut-Extrude9", "cut", "closed"],
];

const VIEW_TOOLS = [
  ["zoomfit"], ["zoomarea"], ["prevview"], ["section"], ["dynview"], ["orient", 1],
  ["display", 1], ["eye", 1], ["editAppear"], ["scene", 1], ["monitor", 1],
];

const PANEL_TABS = ["part", "props", "config", "dimx", "appear", "cam"];
const TASKS = ["globe", "home", "library", "folder", "palette", "appear", "props"];

const Big = ({ icon, lines, w, caret, on }) => (
  <BigButton $w={w} $on={on}>
    <Icon name={icon} />
    <BigLabel>{lines[0]}{lines[1] && <><br />{lines[1]}</>}</BigLabel>
    {caret && <Caret />}
  </BigButton>
);

const SmallStack = ({ w, items }) => (
  <Stack $w={w}>
    {items.map(([icon, label]) => (
      <SmallButton key={label}><Icon name={icon} />{label}</SmallButton>
    ))}
  </Stack>
);

const Model = () => (
  <Scene viewBox="182 119 1098 553" aria-label="bottle model">
    <polygon points="489,333 771,516 765,610 483,425" fill="#7c8090" />
    <polygon points="771,516 969,439 963,531 765,610" fill="#4e535e" />
    <polygon points="495,240 778,427 771,518 489,335" fill="#53ad50" />
    <polygon points="778,427 975,348 969,440 771,518" fill="#376e33" />
    <polygon points="693,161 975,348 778,427 495,240" fill="#539c50" stroke="#bf8426" strokeWidth="1.2" strokeLinejoin="round" />
    <ellipse cx="865" cy="481" rx="47" ry="27" transform="rotate(-55 865 481)" fill="#612e33" />
    <circle cx="701" cy="210" r="1.4" fill="#8b9a3c" />
    <g strokeWidth="3">
      <path d="M215 627L205 621" stroke="#1f6a2c" />
      <path d="M198 616L208 617L204 624Z" fill="#1f6a2c" />
      <path d="M215 627L204 631" stroke="#b31428" />
      <path d="M195 633L203 627L206 635Z" fill="#b31428" />
      <path d="M214 627V640" stroke="#1d1aa5" />
      <path d="M210 638H218L213 649Z" fill="#1d1aa5" />
    </g>
    <g fill="none" strokeWidth="1">
      <path d="M194 611L197 614L199 611M197 614V617" stroke="#4ba35b" />
      <path d="M191 632L196 638M196 632L191 638" stroke="#d83a4c" />
      <path d="M210 649H215L210 655H215" stroke="#3b38c4" />
    </g>
  </Scene>
);

export default function App() {
  return (
    <Page>
      <GlobalStyle />
      <AppWindow>
        <TitleBar>
          <Brand>
            <BrandMark viewBox="0 0 15 15" aria-hidden="true">
              <g fill="none" stroke="#b5202e" strokeWidth="1.3" strokeLinecap="round" strokeLinejoin="round">
                <path d="M3.4 1.4C6.4 0.6 8.6 1.4 7.2 3.2C6.2 4.6 4.6 5 3.2 5.4" />
                <path d="M5.4 5.6C8.4 5.4 8 8.8 5 11.2C3.6 12.4 2 13 0.8 13.2L4.4 6.6" />
                <path d="M14.2 5.8C11.6 5.2 9.6 6.6 11 8.6C12.6 10.6 11.6 13.2 7.4 13" />
              </g>
            </BrandMark>
            <span><b>SOLID</b>WORKS</span>
          </Brand>
          <Menu>{MENU.map((m) => <MenuItem key={m}>{m}</MenuItem>)}</Menu>
          <PinBox><Icon name="pin" size={11} /></PinBox>
          <QuickBar>
            <IconButton aria-label="Home"><Icon name="home" /></IconButton>
            <IconButton aria-label="New"><Icon name="doc" /></IconButton><Caret />
            <IconButton aria-label="Open"><Icon name="open" /></IconButton><Caret />
            <IconButton aria-label="Save"><Icon name="save" /></IconButton><Caret />
            <IconButton aria-label="Print"><Icon name="print" /></IconButton><Caret $c="#aaa" />
            <IconButton $w={88} aria-label="Undo" />
            <IconButton $faint aria-label="Rebuild"><Icon name="traffic" /></IconButton>
            <IconButton $faint aria-label="Properties"><Icon name="props" /></IconButton>
            <IconButton $faint aria-label="Options"><Icon name="gear" /></IconButton>
          </QuickBar>
          <DocName>bottle *</DocName>
          <SearchBox>
            <Icon name="terminal" size={12} />
            <SearchInput placeholder="Search Commands" aria-label="Search Commands" />
            <Icon name="search" size={12} />
            <Caret />
          </SearchBox>
          <WindowButtons>
            <IconButton aria-label="Account"><Icon name="user" /></IconButton>
            <IconButton aria-label="Help"><Icon name="help" /></IconButton>
            <IconButton aria-label="Minimize"><Icon name="min" size={12} /></IconButton>
            <IconButton aria-label="Restore"><Icon name="restore" size={12} /></IconButton>
            <IconButton aria-label="Close"><Icon name="close" size={10} /></IconButton>
          </WindowButtons>
        </TitleBar>

        <Ribbon>
          <Group>
            <Big icon="extrude" w={48} lines={["Extruded", "Boss/Base"]} />
            <Big icon="revolve" w={49} lines={["Revolved", "Boss/Base"]} />
            <SmallStack w={102} items={[["sweep", "Swept Boss/Base"], ["loft", "Lofted Boss/Base"], ["boundary", "Boundary Boss/Base"]]} />
          </Group>
          <Group>
            <Big icon="cut" w={39} lines={["Extruded", "Cut"]} />
            <Big icon="hole" w={58} lines={["Hole Wizard"]} caret />
            <Big icon="revcut" w={42} lines={["Revolved", "Cut"]} />
            <SmallStack w={78} items={[["sweptcut", "Swept Cut"], ["loftcut", "Lofted Cut"], ["boundcut", "Boundary Cut"]]} />
          </Group>
          <Group>
            <Big icon="fillet" w={22} lines={["Fillet"]} caret />
            <Big icon="linear" w={66} lines={["Linear Pattern"]} caret />
            <SmallStack w={46} items={[["rib", "Rib"], ["draft", "Draft"], ["shell", "Shell"]]} />
            <SmallStack w={56} items={[["wrap", "Wrap"], ["intersect", "Intersect"], ["mirror", "Mirror"]]} />
          </Group>
          <Big icon="refgeo" w={47} lines={["Referenc..."]} caret />
          <Big icon="curves" w={36} lines={["Curves"]} caret />
          <Big icon="instant" w={48} lines={["Instant3D"]} on />
          <Collapse aria-label="Collapse ribbon">
            <svg width="8" height="6" viewBox="0 0 8 6"><path d="M1 5L4 2L7 5" fill="none" stroke="#222" strokeWidth="1.5" /></svg>
          </Collapse>
        </Ribbon>

        <Workspace>
          <TabRow>
            <Tabs>
              {TABS.map(([t, w, on, bold]) => <Tab key={t} $w={w} $on={on} $bold={bold}>{t}</Tab>)}
            </Tabs>
            <DocButtons>
              {["paneL", "paneR", "min", "restore", "close"].map((n) => (
                <IconButton key={n} $c="#7b8187" aria-label={n}><Icon name={n} size={11} /></IconButton>
              ))}
            </DocButtons>
          </TabRow>
          <Body>
            <SidePanel>
              <PanelGrip />
              <PanelTabs>
                {PANEL_TABS.map((n, i) => (
                  <PanelTab key={n} $on={i === 0} aria-label={n}><Icon name={n} size={13} /></PanelTab>
                ))}
                <MoreTabs aria-label="More tabs">
                  <svg width="6" height="8" viewBox="0 0 6 8"><path d="M1 1L4.5 4L1 7" fill="none" stroke="#222" strokeWidth="1.4" /></svg>
                </MoreTabs>
              </PanelTabs>
              <FilterBox>
                <Icon name="funnel" size={12} />
                <SearchInput aria-label="Filter" />
              </FilterBox>
              <TreeArea>
                <Tree>
                  {TREE.map(([label, icon, twist, child]) => (
                    <TreeRow key={label} $child={child}>
                      <Twist>{twist === "open" ? <Caret /> : twist === "closed" ? <RightCaret /> : null}</Twist>
                      <Icon name={icon} />
                      <RowLabel>{label}</RowLabel>
                    </TreeRow>
                  ))}
                </Tree>
                <VScroll><Thumb $w={4} $h={137} /></VScroll>
              </TreeArea>
              <HScroll><Thumb $w={104} $h={4} /></HScroll>
              <PanelHandle aria-label="Collapse panel" />
            </SidePanel>
            <Viewport>
              <Model />
              <ViewTools>
                {VIEW_TOOLS.map(([n, caret]) => (
                  <React.Fragment key={n}>
                    <IconButton aria-label={n}><Icon name={n} /></IconButton>
                    {caret && <ViewCaret $c="#777d83" />}
                  </React.Fragment>
                ))}
              </ViewTools>
              <TaskPane>
                {TASKS.map((n) => (
                  <TaskTab key={n} $on={n === "appear"} aria-label={n}><Icon name={n} /></TaskTab>
                ))}
              </TaskPane>
              <Watermark>
                <WatermarkTitle>Activate Windows</WatermarkTitle>
                Go to Settings to activate Windows.
              </Watermark>
            </Viewport>
          </Body>
        </Workspace>

        <BottomTabs>
          {["M7 1L3 4L7 7ZM2 1V7", "M6 1L2 4L6 7Z", "M2 1L6 4L2 7Z", "M1 1L5 4L1 7ZM6 1V7"].map((d) => (
            <NavCell key={d} aria-label="Scroll tabs">
              <svg width="8" height="8" viewBox="0 0 8 8"><path d={d} fill="currentColor" stroke="currentColor" strokeWidth="0.8" /></svg>
            </NavCell>
          ))}
          <BottomTab $w={49} $on>Model</BottomTab>
          <BottomTab $w={60}>3D Views</BottomTab>
          <BottomTab $w={95}>Motion Study 1</BottomTab>
        </BottomTabs>
        <StatusBar>
          <StatusText>SOLIDWORKS Premium 2022 SP1.0</StatusText>
          <StatusCell $w={70}>Editing Part</StatusCell>
          <StatusCell $w={145}><Icon name="statusEdit" size={11} /></StatusCell>
          <StatusCell $w={46}>MMGS</StatusCell>
          <StatusCell $w={20}>
            <svg width="5" height="4" viewBox="0 0 5 4"><path d="M0 3.5L2.5 0.5L5 3.5Z" fill="#333" /></svg>
          </StatusCell>
          <StatusCell $w={15}><Icon name="tag" size={12} /></StatusCell>
        </StatusBar>
      </AppWindow>
      <Stamp>ScreenHunter  03/12  21:50:02</Stamp>
      <ClickHalo />
      <Pointer viewBox="0 0 9 14"><path d="M1 1V11.5L3.4 9.4L5 13L6.6 12.2L5 8.8H8.2Z" fill="#fff" stroke="#333" strokeWidth="0.8" /></Pointer>
    </Page>
  );
}
